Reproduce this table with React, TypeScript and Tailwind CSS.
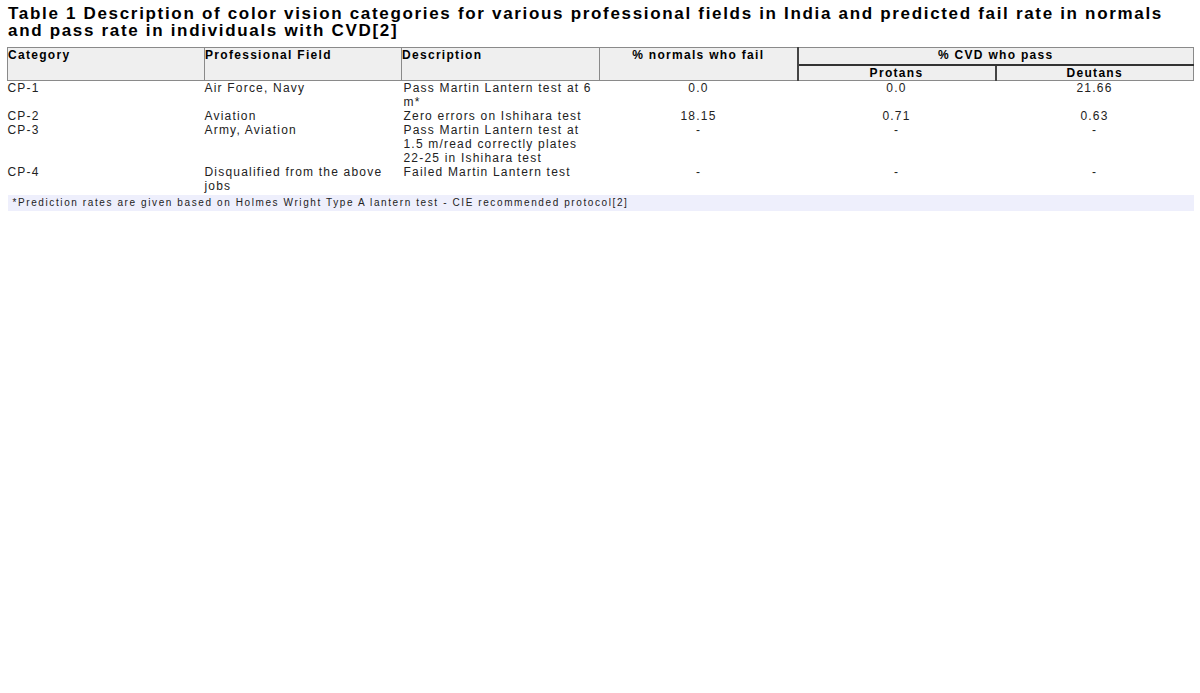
const rows = [
  { cat: 'CP-1', field: ['Air Force, Navy'], desc: ['Pass Martin Lantern test at 6', 'm*'], normals: '0.0', protans: '0.0', deutans: '21.66' },
  { cat: 'CP-2', field: ['Aviation'], desc: ['Zero errors on Ishihara test'], normals: '18.15', protans: '0.71', deutans: '0.63' },
  { cat: 'CP-3', field: ['Army, Aviation'], desc: ['Pass Martin Lantern test at', '1.5 m/read correctly plates', '22-25 in Ishihara test'], normals: '-', protans: '-', deutans: '-' },
  { cat: 'CP-4', field: ['Disqualified from the above', 'jobs'], desc: ['Failed Martin Lantern test'], normals: '-', protans: '-', deutans: '-' },
];

function Lines({ lines }: { lines: string[] }) {
  return (
    <>
      {lines.map((l) => (
        <div key={l} className="whitespace-nowrap">{l}</div>
      ))}
    </>
  );
}

export default function App() {
  return (
    <div className="min-h-screen bg-white text-black px-[7px] pt-[5px]" style={{ fontFamily: '"Liberation Sans", Arial, sans-serif' }}>
      <h1 className="text-[17px] leading-[17px] font-bold tracking-[1.68px] pl-[1px] whitespace-nowrap">
        Table 1 Description of color vision categories for various professional fields in India and predicted fail rate in normals
        <br />
        and pass rate in individuals with CVD[2]
      </h1>
      <table className="w-[1186px] table-fixed border-collapse mt-[8px] text-[12px] leading-[14px] tracking-[1.2px]">
        <colgroup>
          <col className="w-[197px]" />
          <col className="w-[197px]" />
          <col className="w-[198px]" />
          <col className="w-[198px]" />
          <col className="w-[198px]" />
          <col className="w-[198px]" />
        </colgroup>
        <thead>
          <tr className="bg-[#efefef] font-bold">
            <th rowSpan={2} className="border border-[#8a8a8a] text-left align-top px-0 h-[33px] tracking-[1.3px]">Category</th>
            <th rowSpan={2} className="border border-[#8a8a8a] text-left align-top px-0 tracking-[1.3px]">Professional Field</th>
            <th rowSpan={2} className="border border-[#8a8a8a] text-left align-top px-0 tracking-[1.3px]">Description</th>
            <th rowSpan={2} className="border border-[#8a8a8a] border-r-2 border-r-[#444] text-center align-top px-0 tracking-[1.3px]">% normals who fail</th>
            <th colSpan={2} className="border border-[#8a8a8a] border-b-2 border-b-[#333] text-center align-top h-[17px] tracking-[1.3px]">% CVD who pass</th>
          </tr>
          <tr className="bg-[#efefef] font-bold">
            <th className="border border-[#8a8a8a] border-r-2 border-r-[#444] text-center h-[16px] tracking-[1.3px]">Protans</th>
            <th className="border border-[#8a8a8a] text-center tracking-[1.3px]">Deutans</th>
          </tr>
        </thead>
        <tbody className="text-[#222]">
          {rows.map((r) => (
            <tr key={r.cat} className="align-top">
              <td>{r.cat}</td>
              <td><Lines lines={r.field} /></td>
              <td className="pl-[2px]"><Lines lines={r.desc} /></td>
              <td className="text-center">{r.normals}</td>
              <td className="text-center">{r.protans}</td>
              <td className="text-center">{r.deutans}</td>
            </tr>
          ))}
          <tr>
            <td colSpan={6} className="pt-[2px]">
              <div className="bg-[#eeeffc] text-[10px] leading-[16px] pl-[5px] tracking-[1.6px]">
                *Prediction rates are given based on Holmes Wright Type A lantern test - CIE recommended protocol[2]
              </div>
            </td>
          </tr>
        </tbody>
      </table>
    </div>
  );
}
